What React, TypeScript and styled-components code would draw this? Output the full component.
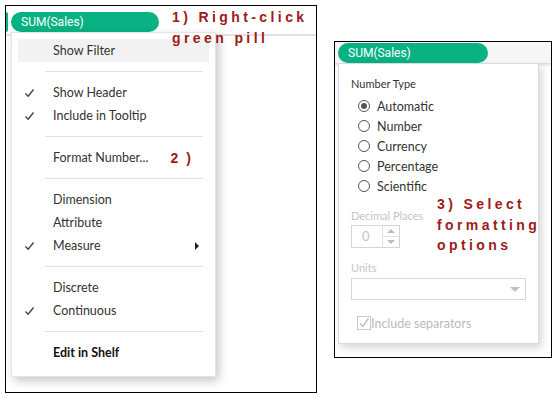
import styled, { createGlobalStyle } from "styled-components";

const GlobalStyle = createGlobalStyle`
  html, body {
    margin: 0;
    padding: 0;
    background: #fff;
  }
  body {
    font-family: Lato, "Open Sans", Arial, sans-serif;
  }
`;

type MenuEntry =
  | { kind: "sep" }
  | { kind: "item"; label: string; checked?: boolean; hover?: boolean; bold?: boolean; sub?: boolean; note?: string };

const menuEntries: MenuEntry[] = [
  { kind: "item", label: "Show Filter", hover: true },
  { kind: "sep" },
  { kind: "item", label: "Show Header", checked: true },
  { kind: "item", label: "Include in Tooltip", checked: true },
  { kind: "sep" },
  { kind: "item", label: "Format Number...", note: "2 )" },
  { kind: "sep" },
  { kind: "item", label: "Dimension" },
  { kind: "item", label: "Attribute" },
  { kind: "item", label: "Measure", checked: true, sub: true },
  { kind: "sep" },
  { kind: "item", label: "Discrete" },
  { kind: "item", label: "Continuous", checked: true },
  { kind: "sep" },
  { kind: "item", label: "Edit in Shelf", bold: true },
];

const numberTypes = ["Automatic", "Number", "Currency", "Percentage", "Scientific"];

const Check = () => (
  <svg width="11" height="10" viewBox="0 0 11 10">
    <path d="M1.5 5.5 L4.2 8.3 L9.5 1.5" fill="none" stroke="#444" strokeWidth="1.4" />
  </svg>
);

export default function App() {
  return (
    <>
      <GlobalStyle />
      <Page>
        <LeftPanel>
          <Shelf>
            <PrevPill />
            <Pill>SUM(Sales)</Pill>
          </Shelf>
          <Menu>
            {menuEntries.map((e, i) =>
              e.kind === "sep" ? (
                <Separator key={i} />
              ) : (
                <MenuItem key={i} $hover={e.hover}>
                  <CheckCell>{e.checked && <Check />}</CheckCell>
                  <ItemLabel $bold={e.bold}>{e.label}</ItemLabel>
                  {e.note && <InlineNote>{e.note}</InlineNote>}
                  {e.sub && <SubArrow />}
                </MenuItem>
              )
            )}
          </Menu>
          <Note $top={1} $left={166}>
            1) Right-click
            <br />
            green pill
          </Note>
        </LeftPanel>

        <RightPanel>
          <LightShelf>
            <Pill $wide>SUM(Sales)</Pill>
          </LightShelf>
          <Dialog>
            <FieldLabel>Number Type</FieldLabel>
            <RadioGroup>
              {numberTypes.map((t, i) => (
                <RadioRow key={t}>
                  <Radio $on={i === 0} />
                  <span>{t}</span>
                </RadioRow>
              ))}
            </RadioGroup>
            <FieldLabel $muted>Decimal Places</FieldLabel>
            <Spinner>
              <SpinValue>0</SpinValue>
              <SpinButtons>
                <SpinHalf>
                  <Tri $up />
                </SpinHalf>
                <SpinHalf>
                  <Tri />
                </SpinHalf>
              </SpinButtons>
            </Spinner>
            <FieldLabel $muted>Units</FieldLabel>
            <SelectBox>
              <Tri $big />
            </SelectBox>
            <CheckRow>
              <CheckBox>
                <svg width="12" height="12" viewBox="0 0 12 12">
                  <path d="M2 6.5 L4.8 9.5 L10.5 1.5" fill="none" stroke="#bbb" strokeWidth="1.3" />
                </svg>
              </CheckBox>
              <span>Include separators</span>
            </CheckRow>
          </Dialog>
          <Note $top={152} $left={102}>
            3) Select
            <br />
            formatting
            <br />
            options
          </Note>
        </RightPanel>
      </Page>
    </>
  );
}

const Page = styled.div`
  display: flex;
  align-items: flex-start;
  gap: 17px;
  padding: 5px 0 0 5px;
  width: 558px;
  height: 400px;
  box-sizing: border-box;
`;

const LeftPanel = styled.div`
  position: relative;
  width: 312px;
  height: 388px;
  border: 1px solid #000;
  box-sizing: border-box;
  overflow: hidden;
`;

const RightPanel = styled.div`
  position: relative;
  width: 218px;
  height: 317px;
  margin-top: 36px;
  border: 1px solid #000;
  box-sizing: border-box;
  overflow: hidden;
`;

const Shelf = styled.div`
  display: flex;
  align-items: flex-start;
  gap: 3px;
  height: 30px;
  padding-top: 6px;
  box-sizing: border-box;
  border-bottom: 2px solid #e2e2e2;
`;

const LightShelf = styled.div`
  display: flex;
  height: 22px;
  padding: 1px 0 0 3px;
  box-sizing: border-box;
  background: #f7f7f7;
  border-bottom: 1px solid #dcdcdc;
  box-shadow: 0 2px 0 #ececec;
`;

const PrevPill = styled.div`
  width: 2px;
  height: 20px;
  background: #08b282;
  border-radius: 0 10px 10px 0;
`;

const Pill = styled.div<{ $wide?: boolean }>`
  width: ${({ $wide }) => ($wide ? "150px" : "148px")};
  height: 20px;
  border-radius: 10px;
  background: #08b282;
  color: #fff;
  font-family: Roboto, Arial, sans-serif;
  font-size: 12px;
  line-height: 20px;
  padding-left: 10px;
  box-sizing: border-box;
`;

const Note = styled.div<{ $top: number; $left: number }>`
  position: absolute;
  z-index: 2;
  top: ${({ $top }) => $top}px;
  left: ${({ $left }) => $left}px;
  color: #9e1a1a;
  font-family: "Liberation Sans", Arial, sans-serif;
  font-weight: bold;
  font-size: 14px;
  line-height: 20.5px;
  letter-spacing: 3.4px;
  white-space: nowrap;
`;

const Menu = styled.div`
  position: absolute;
  top: 26px;
  left: 5px;
  width: 205px;
  height: 345px;
  padding: 6px 6px 0;
  box-sizing: border-box;
  background: #fff;
  border: 1px solid #e4e4e4;
  box-shadow: 3px 4px 9px rgba(0, 0, 0, 0.22);
`;

const MenuItem = styled.div<{ $hover?: boolean }>`
  position: relative;
  display: flex;
  align-items: center;
  height: 23px;
  background: ${({ $hover }) => ($hover ? "#f2f2f2" : "transparent")};
  font-size: 12.5px;
  color: #333;
`;

const CheckCell = styled.div`
  width: 35px;
  padding-left: 6px;
  display: flex;
  align-items: center;
  box-sizing: border-box;
`;

const ItemLabel = styled.span<{ $bold?: boolean }>`
  font-weight: ${({ $bold }) => ($bold ? 700 : 400)};
  color: ${({ $bold }) => ($bold ? "#111" : "#333")};
`;

const InlineNote = styled.span`
  margin-left: 22px;
  color: #9e1a1a;
  font-family: "Liberation Sans", Arial, sans-serif;
  font-weight: bold;
  font-size: 14px;
  letter-spacing: 2px;
`;

const SubArrow = styled.span`
  position: absolute;
  right: 10px;
  top: 8px;
  border-left: 4px solid #222;
  border-top: 4px solid transparent;
  border-bottom: 4px solid transparent;
`;

const Separator = styled.div`
  height: 19px;
  display: flex;
  align-items: center;
  padding: 0 6px 0 27px;
  &::before {
    content: "";
    flex: 1;
    height: 1px;
    background: #e2e2e2;
  }
`;

const Dialog = styled.div`
  position: absolute;
  top: 21px;
  left: 3px;
  width: 201px;
  height: 281px;
  padding: 13px 0 0 12px;
  box-sizing: border-box;
  background: #fff;
  border: 1px solid #dadada;
  box-shadow: 3px 4px 8px rgba(0, 0, 0, 0.16);
  display: flex;
  flex-direction: column;
  font-size: 12.5px;
  color: #333;
`;

const FieldLabel = styled.div<{ $muted?: boolean }>`
  font-size: 11px;
  line-height: 14px;
  color: ${({ $muted }) => ($muted ? "#c4c4c4" : "#333")};
  margin-top: ${({ $muted }) => ($muted ? "13px" : "0")};
`;

const RadioGroup = styled.div`
  display: flex;
  flex-direction: column;
  margin-top: 5px;
`;

const RadioRow = styled.div`
  display: flex;
  align-items: center;
  gap: 7px;
  height: 20px;
  padding-left: 7px;
`;

const Radio = styled.span<{ $on?: boolean }>`
  width: 12px;
  height: 12px;
  border: 1px solid #555;
  border-radius: 50%;
  box-sizing: border-box;
  display: flex;
  align-items: center;
  justify-content: center;
  &::after {
    content: "";
    width: 6px;
    height: 6px;
    border-radius: 50%;
    background: ${({ $on }) => ($on ? "#555" : "transparent")};
  }
`;

const Spinner = styled.div`
  display: flex;
  width: 49px;
  height: 23px;
  margin-top: 2px;
  border: 1px solid #d4d4d4;
  box-sizing: border-box;
`;

const SpinValue = styled.div`
  flex: 1;
  padding-left: 10px;
  line-height: 21px;
  color: #c4c4c4;
  font-size: 13px;
`;

const SpinButtons = styled.div`
  width: 16px;
  display: flex;
  flex-direction: column;
  border-left: 1px solid #e0e0e0;
`;

const SpinHalf = styled.div`
  flex: 1;
  display: flex;
  align-items: center;
  justify-content: center;
  & + & {
    border-top: 1px solid #e0e0e0;
  }
`;

const Tri = styled.span<{ $up?: boolean; $big?: boolean }>`
  width: 0;
  height: 0;
  border-left: ${({ $big }) => ($big ? 5 : 4)}px solid transparent;
  border-right: ${({ $big }) => ($big ? 5 : 4)}px solid transparent;
  ${({ $up, $big }) =>
    $up
      ? `border-bottom: 4px solid #bdbdbd;`
      : `border-top: ${$big ? 5 : 4}px solid #bdbdbd;`}
`;

const SelectBox = styled.div`
  display: flex;
  align-items: center;
  justify-content: flex-end;
  width: 175px;
  height: 22px;
  margin-top: 3px;
  padding-right: 5px;
  border: 1px solid #d6d6d6;
  box-sizing: border-box;
`;

const CheckRow = styled.div`
  display: flex;
  align-items: center;
  height: 18px;
  margin-top: 14px;
  padding-left: 6px;
  color: #bbb;
  font-size: 12.5px;
`;

const CheckBox = styled.span`
  width: 14px;
  height: 14px;
  border: 1px solid #c8c8c8;
  box-sizing: border-box;
  display: flex;
  align-items: center;
  justify-content: center;
`;
